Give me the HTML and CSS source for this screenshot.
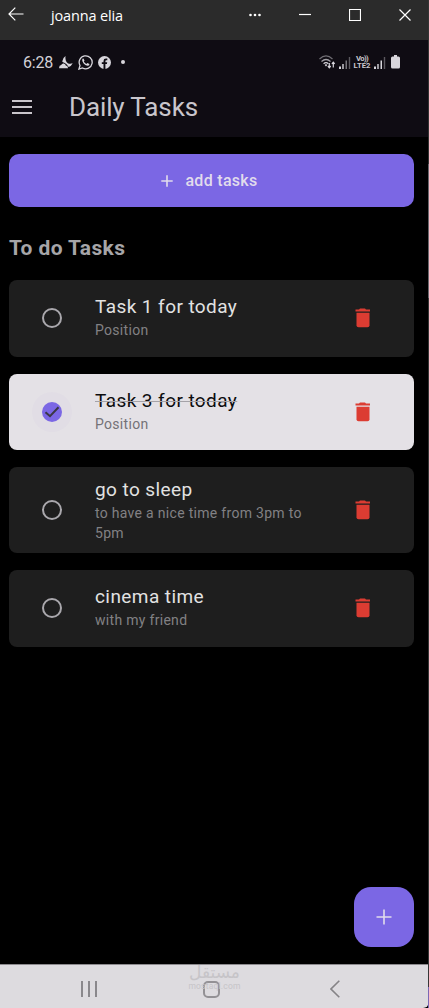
FILE: index.html
```html
<!DOCTYPE html>
<html lang="en">
<head>
<meta charset="utf-8">
<title>Daily Tasks</title>
<link rel="stylesheet" href="styles.css">
</head>
<body>
<svg class="defs" width="0" height="0">
  <symbol id="trash" viewBox="0 0 16 20">
    <path d="M5 .6h5l1 1h4V3.500H.5V1.600H4z"/>
    <path d="M1.500 4.700h13v12.600q0 2-2 2h-9q-2 0-2-2z"/>
  </symbol>
  <symbol id="signal" viewBox="0 0 12 12">
    <path d="M0 9.500h2V12H0zM3.300 7h1.400v5H3.300z"/>
    <path class="bar-mid" d="M6.500 3.500h1.500V12H6.500z"/>
    <path class="bar-dim" d="M9.800 0h1.400v12H9.800z"/>
  </symbol>
</svg>
<div class="window">
  <header class="titlebar">
    <svg class="back" width="16" height="14" viewBox="0 0 16 14"><path d="M15.500 7H1M7.300.700 1 7l6.300 6.300"/></svg>
    <span class="caption">joanna elia</span>
    <div class="controls">
      <svg width="12" height="14" viewBox="0 0 12 14"><g class="dots"><circle cx="1.500" cy="7" r="1.300"/><circle cx="6" cy="7" r="1.300"/><circle cx="10.500" cy="7" r="1.300"/></g></svg>
      <svg width="12" height="14" viewBox="0 0 12 14"><path d="M0 6.500h12"/></svg>
      <svg width="12" height="14" viewBox="0 0 12 14"><path d="M.5 1.500h11v11H.5z"/></svg>
      <svg width="12" height="14" viewBox="0 0 12 14"><path d="m.5 1.500 11 11m0-11-11 11"/></svg>
    </div>
  </header>
  <main class="phone">
    <div class="top">
      <div class="status">
        <span class="clock">6:28</span>
        <svg class="moon" width="14" height="13" viewBox="0 0 14 13"><path d="M6.500 0Q5.800 5 8.800 7.200 11 8.300 13.700 7.300q-1.400 3-4 3.600Q7.800 8 5.800 7 3.500 6 3.200 5.400 4 1.500 6.500 0z"/><path d="M.2 12.300Q-.2 9.500 2.200 9q.8-2 2.700-1.500 1.600.3 1.900 2.100 2.400.3 2.200 2.700z"/></svg>
        <svg class="whatsapp" width="15" height="15" viewBox="0 0 15 15"><path class="ring" d="M.9 14.100 2 10.500A6.500 6.500 0 1 1 4.500 13z"/><path class="handset" d="M4.300 4q.7-.8 1.300-.3l.9 1.800-.7 1.100q1 1.800 2.600 2.300l1-1 2 1q.3 1.300-1.400 1.900Q8 11 5.800 8.800 3.500 6.300 4.300 4z"/></svg>
        <svg class="facebook" width="13" height="13" viewBox="0 0 13 13"><circle cx="6.500" cy="6.500" r="6.500"/><path d="M5.500 13V8H3.800V6.200h1.700V5q0-2.400 2.500-2.400h1.300v1.600H8.300q-.9 0-.9.900v1.100h1.800L8.900 8H7.400v5z"/></svg>
        <span class="more"></span>
        <div class="radio">
          <svg class="wifi" width="17" height="14" viewBox="0 0 17 14"><g><path class="dim" d="M.5 4Q7-2.200 13.500 4"/><path class="mid" d="M2.500 6.500q4.500-4 9 0"/><path d="M4.600 8.700q2.400-2 4.800 0"/></g><path class="fill" d="M5.700 10 7 9l1.300 1L7 11.500z"/><path class="arrows" d="M10.300 8v4.500M8.900 11l1.400 1.700 1.400-1.700M14.300 12.500V7.300M12.900 8.900l1.400-1.700 1.400 1.700"/></svg>
          <svg class="sig" width="12" height="12"><use href="#signal"/></svg>
          <span class="lte"><span class="vo">Vo))</span><span>LTE2</span></span>
          <svg class="sig strong" width="12" height="12"><use href="#signal"/></svg>
          <svg class="battery" width="9" height="14" viewBox="0 0 9 14"><path d="M3 0h3v1.500h1.500Q9 1.500 9 3v9q0 1.500-1.500 1.500h-6Q0 13.500 0 12V3q0-1.500 1.500-1.500H3z"/></svg>
        </div>
      </div>
      <div class="appbar">
        <span class="menu"><i></i><i></i><i></i></span>
        <h1>Daily Tasks</h1>
      </div>
    </div>
    <section class="content">
      <button class="add"><svg width="12" height="12" viewBox="0 0 12 12"><path d="M6 .3v11.400M.3 6h11.400"/></svg><span>add tasks</span></button>
      <h2>To do Tasks</h2>
      <ul class="tasks">
        <li class="task">
          <span class="check"></span>
          <div class="text"><p class="name">Task 1 for today</p><p class="note">Position</p></div>
          <svg class="trash" width="16" height="20"><use href="#trash"/></svg>
        </li>
        <li class="task done">
          <span class="check"><svg width="20" height="20" viewBox="0 0 20 20"><path d="m3.500 10.200 4.500 4 8.500-9"/></svg></span>
          <div class="text"><p class="name">Task 3 for today</p><p class="note">Position</p></div>
          <svg class="trash" width="16" height="20"><use href="#trash"/></svg>
        </li>
        <li class="task tall">
          <span class="check"></span>
          <div class="text"><p class="name">go to sleep</p><p class="note">to have a nice time from 3pm to 5pm</p></div>
          <svg class="trash" width="16" height="20"><use href="#trash"/></svg>
        </li>
        <li class="task">
          <span class="check"></span>
          <div class="text"><p class="name">cinema time</p><p class="note">with my friend</p></div>
          <svg class="trash" width="16" height="20"><use href="#trash"/></svg>
        </li>
      </ul>
      <button class="fab" aria-label="Add"><svg width="16" height="16" viewBox="0 0 16 16"><path d="M8 .5v15M.5 8h15"/></svg></button>
    </section>
    <nav class="navbar">
      <span class="recents"><i></i><i></i><i></i></span>
      <span class="home"></span>
      <svg class="prev" width="10" height="18" viewBox="0 0 10 18"><path d="M9.300.800 1 9l8.300 8.200"/></svg>
      <div class="mark"><span lang="ar">مستقل</span><small>mostaql.com</small></div>
    </nav>
  </main>
  <i class="edge"></i>
</div>
</body>
</html>
```
FILE: styles.css
```css
* { box-sizing: border-box; }
body { margin: 0; background: #000; font-family: Roboto, sans-serif; }
h1, h2, p, ul { margin: 0; padding: 0; }
svg { display: block; flex: none; }
button { border: 0; padding: 0; font-family: inherit; }
.defs { position: absolute; }

.window { position: relative; width: 429px; height: 1008px; display: flex; flex-direction: column; overflow: hidden; }
.titlebar { height: 40px; flex: none; background: #2b2b2b; display: flex; align-items: flex-start; padding: 7px 18px 0 8px; }
.titlebar svg { fill: none; stroke: #fff; stroke-width: 1.2; }
.caption { margin: -1px 0 0 27px; font: 14.5px/20px "Open Sans", sans-serif; letter-spacing: -.15px; color: #fff; }
.controls { display: flex; gap: 38px; margin: 1px 0 0 auto; }
.titlebar .dots { fill: #fff; stroke: none; }

.phone { flex: 1; display: flex; flex-direction: column; min-height: 0; }
.top { height: 97px; flex: none; background: #0f0c13; padding-top: 12px; }
.status { height: 20px; display: flex; align-items: center; padding: 0 29px 0 23px; fill: #d8d6dc; }
.clock { font-size: 16px; line-height: 20px; letter-spacing: -.2px; padding-top: 2px; color: #d3d1d7; width: 36px; white-space: nowrap; }
.moon { margin-right: 5px; }
.whatsapp { margin-right: 5px; }
.ring { fill: none; stroke: #d8d6dc; stroke-width: 1.3; }
.facebook path { fill: #0f0c13; }
.more { width: 4px; height: 4px; border-radius: 50%; background: #d8d6dc; margin-left: 10px; }
.radio { display: flex; align-items: center; margin-left: auto; }
.wifi { margin-right: 3px; }
.wifi g, .wifi .arrows { fill: none; stroke: #d8d6dc; stroke-width: 1.2; }
.wifi .dim { stroke: #706e74; }
.wifi .mid { stroke: #a3a1a7; }
.sig { margin-top: 1px; --mid: #77757b; }
.strong { --mid: #d8d6dc; }
.bar-mid { fill: var(--mid); }
.bar-dim { fill: #5b595f; }
.lte { display: flex; flex-direction: column; align-items: center; width: 18px; margin: 0 3px 0 2px; font-size: 7.7px; font-weight: 700; line-height: 7px; color: #cac8ce; }
.vo { letter-spacing: -.6px; }
.battery { margin-left: 5px; }
.appbar { display: flex; align-items: center; height: 36px; margin-top: 17px; padding-left: 12px; }
.menu { width: 20px; display: grid; gap: 4px; }
.menu i { height: 2px; background: #c9c5cb; }
.appbar h1 { margin-left: 37px; font-size: 26px; line-height: 36px; font-weight: 400; letter-spacing: -.12px; color: #c9c6cc; }

.content { position: relative; flex: 1; padding: 17px 15px 0 9px; }
.add { width: 100%; height: 53px; border-radius: 10px; background: #7b67e4; display: flex; align-items: center; justify-content: center; gap: 12px; padding-right: 4px; font-size: 16px; font-weight: 500; letter-spacing: .3px; color: #e1dcec; }
.add svg, .fab svg { stroke: #e1dcec; stroke-width: 1.6; }
.content h2 { margin-top: 26px; font-size: 21px; line-height: 30px; font-weight: 700; letter-spacing: .38px; color: #a6a5a8; }
.tasks { list-style: none; display: grid; gap: 17.2px; margin-top: 17px; }
.task { height: 76.5px; display: flex; align-items: center; background: #1e1e1e; border-radius: 8px; padding: 0 43px 0 33px; }
.tall { height: 85.5px; }
.check { width: 20px; height: 20px; flex: none; border: 2px solid #aaa8ad; border-radius: 50%; }
.text { margin-left: 33px; width: 220px; padding-bottom: 2px; }
.tall .text { padding-bottom: 0; }
.name { font-size: 19px; line-height: 25px; letter-spacing: .42px; color: #e2e2e2; }
.note { font-size: 14px; line-height: 20px; letter-spacing: .3px; color: #828184; }
.name + .note { margin-top: 1.2px; }
.trash { margin-left: auto; fill: #dc3c32; }
.done { background: #e4e1e6; }
.done .check { border: 0; background: #7b67e4; box-shadow: 0 0 0 10px rgba(123, 103, 228, .025); }
.done .check path { fill: none; stroke: #3b3844; stroke-width: 2; }
.done .name { color: #0c0c0e; text-decoration: line-through; text-decoration-color: #a5a3a8; text-decoration-thickness: 1px; }
.done .note { color: #747277; }
.fab { position: absolute; right: 15px; bottom: 17px; width: 60px; height: 60px; border-radius: 17px; background: #7b67e4; display: grid; place-items: center; }

.navbar { position: relative; height: 44px; flex: none; background: #dddbdf; border-top: 1px solid #8c8a8e; border-bottom-right-radius: 6px; display: flex; align-items: center; padding: 5px 89px 0 81px; }
.recents { display: flex; gap: 5px; }
.recents i { width: 2px; height: 16px; background: #8a888c; }
.home { width: 17px; height: 17px; border: 2px solid #939195; border-radius: 5px; margin-left: 106px; }
.prev { margin-left: auto; fill: none; stroke: #858387; stroke-width: 1.6; }
.mark { position: absolute; left: 188px; top: -3px; width: 53px; text-align: center; color: #c6c4c8; }
.mark span { display: block; font: 17px/20px "DejaVu Sans", sans-serif; }
.mark small { display: block; font-size: 8.5px; line-height: 8px; letter-spacing: .2px; }
.edge { position: absolute; right: 0; top: 0; width: 1px; height: 1008px; background: linear-gradient(#343434 164px, #69676e 164px 298px, #373737 298px 987px, #7b67b4 987px); }
```
